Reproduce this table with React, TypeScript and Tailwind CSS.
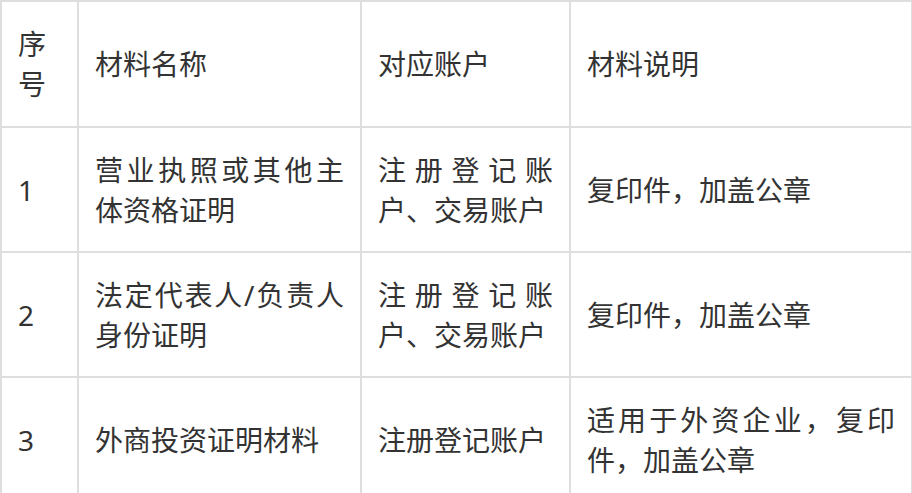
const rows = [
  {
    no: "1",
    name: "营业执照或其他主体资格证明",
    account: "注册登记账户、交易账户",
    note: "复印件，加盖公章",
  },
  {
    no: "2",
    name: "法定代表人/负责人身份证明",
    account: "注册登记账户、交易账户",
    note: "复印件，加盖公章",
  },
  {
    no: "3",
    name: "外商投资证明材料",
    account: "注册登记账户",
    note: "适用于外资企业，复印件，加盖公章",
  },
];

const cell =
  "border-2 border-[#dedede] px-4 align-middle text-justify font-normal";

const App = () => {
  return (
    <div className="min-h-screen bg-white">
      <table
        className="table-fixed border-collapse w-[911px] text-[28px] leading-[40px] text-[#333333]"
        style={{ fontFamily: '"Noto Sans", "Noto Sans CJK SC", sans-serif' }}
      >
        <colgroup>
          <col className="w-[77px]" />
          <col className="w-[283px]" />
          <col className="w-[209px]" />
          <col className="w-[342px]" />
        </colgroup>
        <thead>
          <tr className="h-[126px]">
            <th className={`${cell} text-left`}>序号</th>
            <th className={`${cell} text-left`}>材料名称</th>
            <th className={`${cell} text-left`}>对应账户</th>
            <th className={`${cell} text-left`}>材料说明</th>
          </tr>
        </thead>
        <tbody>
          {rows.map((row) => (
            <tr key={row.no} className="h-[125px]">
              <td className={`${cell} text-left`}>{row.no}</td>
              <td className={cell}>{row.name}</td>
              <td className={cell}>{row.account}</td>
              <td className={cell}>{row.note}</td>
            </tr>
          ))}
        </tbody>
      </table>
    </div>
  );
};

export default App;
